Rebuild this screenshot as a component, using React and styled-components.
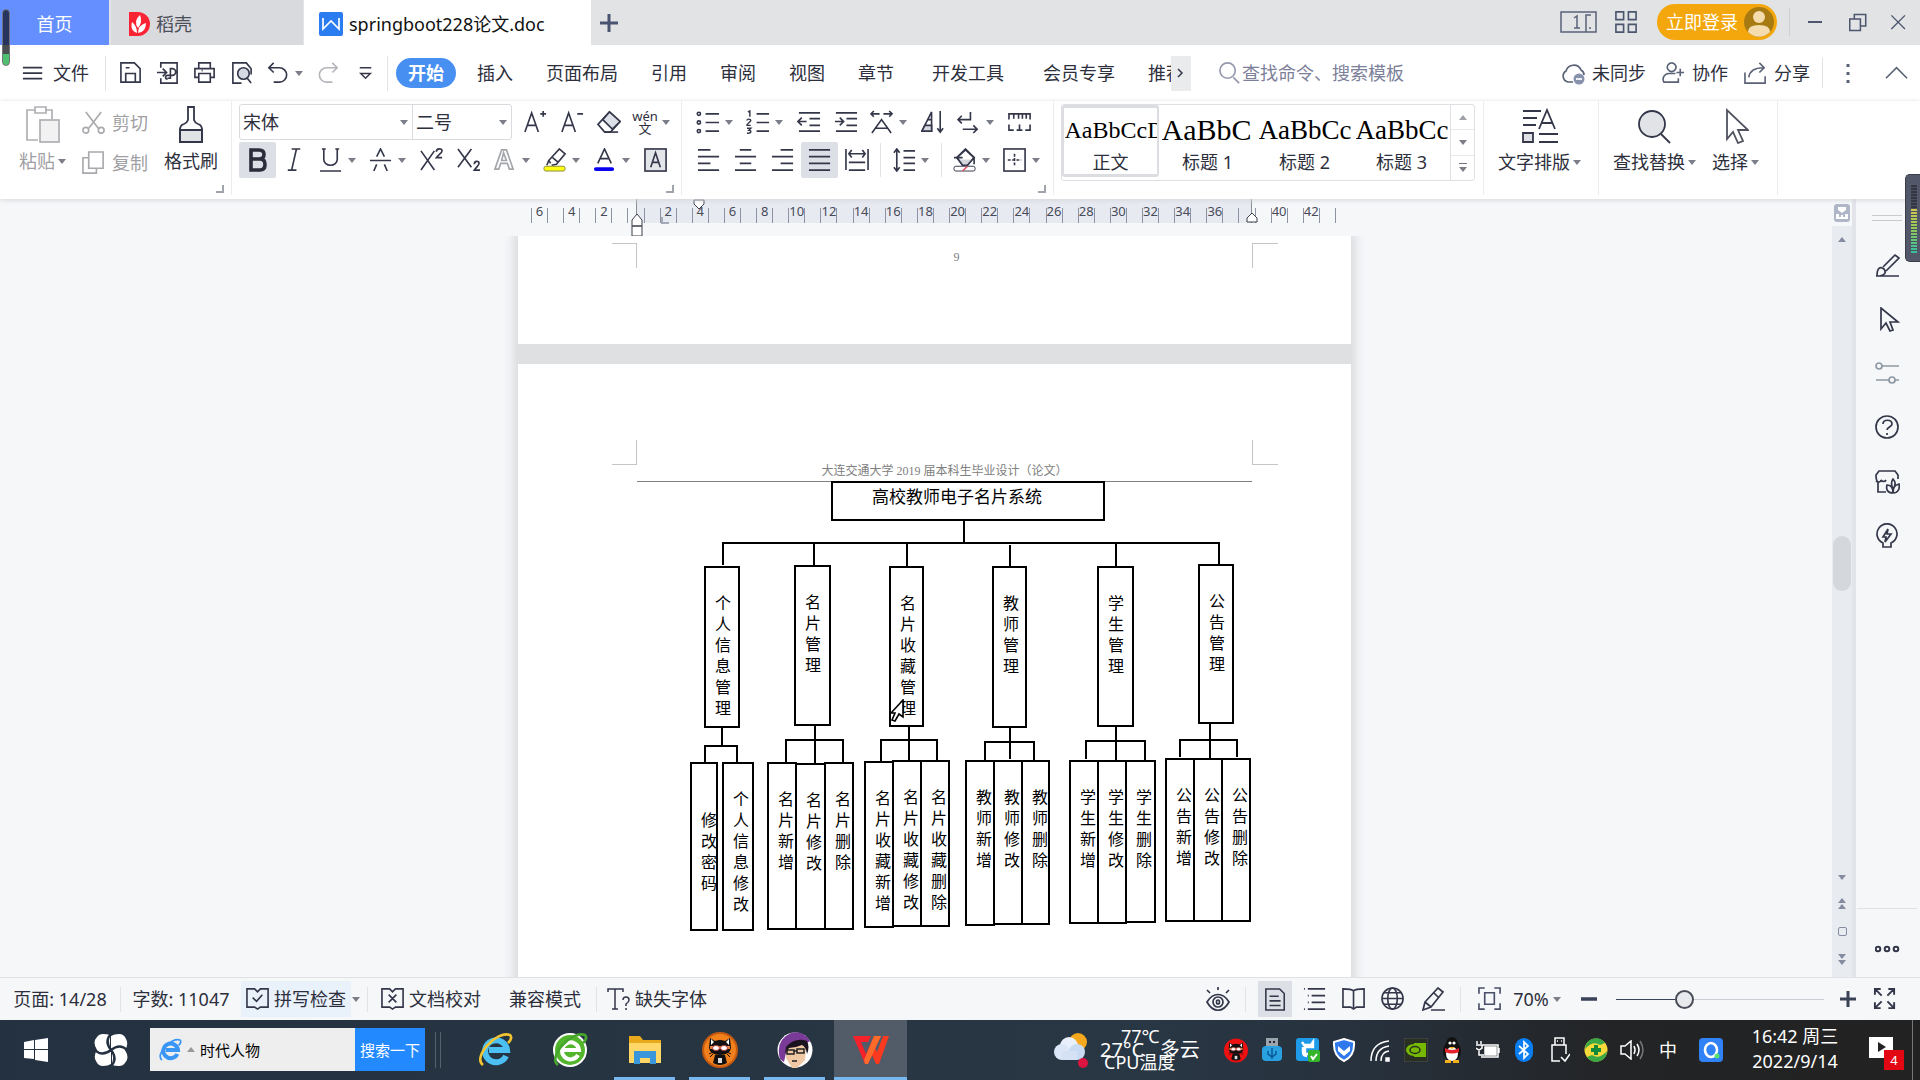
import React from "react";
import styled, { createGlobalStyle, css } from "styled-components";

const ui = `"Noto Sans", "Noto Sans CJK SC", sans-serif`;
const serif = `"Liberation Serif", "Noto Sans CJK SC", serif`;
const ink = "#34374a";

const Global = createGlobalStyle`
  * { box-sizing: border-box; }
  html, body { margin: 0; height: 100%; overflow: hidden; }
  body { font: 18px/24px ${ui}; color: #2d2f3c; background: #f5f7f9; }
  button, input, select { font: inherit; color: inherit; border: 0; margin: 0; padding: 0; background: none; border-radius: 0; outline: 0; }
  button { cursor: default; white-space: nowrap; }
  svg { display: block; flex: none; }
`;

const Shell = styled.div`
  display: flex;
  flex-direction: column;
  height: 100vh;
  position: relative;
  overflow: hidden;
`;

const Caret = styled.span`
  flex: none;
  width: 0;
  height: 0;
  border: 4px solid transparent;
  border-top: 5px solid ${(p) => p.$color || "#7b7d88"};
  border-bottom: 0;
  ${(p) => p.$up && css`transform: rotate(180deg);`}
`;

/* ---------- icons ---------- */
const shapes = {
  save: <path d="M2 2h14l6 6v14H2zM7 22v-9h10v9M7 7h4" />,
  exportPdf: <path d="M5 7V2h17v21H5v-5M1 12h9M7 8l4 4-4 4M12 18h3V8h2a3 3 0 0 1 0 7h-5a2 2 0 0 0 0 4" />,
  print: <path d="M6 7V2h12v5M6 17H2V8h20v9h-4M6 13h12v9H6zM9 10h1" />,
  preview: <g><path d="M12 23H3V2h14l5 6v6" /><circle cx="14" cy="13" r="6" fill="#d5d9e2" /><path d="M18 18l4 5" /></g>,
  undo: <path d="M8 2L3 7l5 5M3 7h11a7 7 0 0 1 0 15H8" />,
  redo: <path d="M16 2l5 5-5 5M21 7H10a7 7 0 0 0 0 15h6" />,
  more: <path d="M6 7h12M7 13h10l-5 5z" strokeWidth="1.500" />,
  menu: <path d="M1 6h21M1 12h21M1 18h21" />,
  scissors: <g><path d="M4 1l13 17M20 1L7 18" /><circle cx="4" cy="20" r="3" /><circle cx="20" cy="20" r="3" /></g>,
  copy: <path d="M7 1h15v17H7zM7 7H1v16h14v-5" />,
  incA: <path d="M2 23L9 3l7 20M4 16h10M18 4h6M21 1v6" />,
  decA: <path d="M2 23L9 3l7 20M4 16h10M18 4h6" />,
  eraser: <g><path d="M1 15L13 2l11 10-10 11H8z" /><path d="M6 10l7-8 11 10-8 8z" fill="#dde0e6" /><path d="M8 23h14" /></g>,
  italic: <path d="M9 1h9M5 23h9M14 1L9 23" />,
  underline: <path d="M5 1v11a7 6 0 0 0 14 0V1M3 1h4M17 1h4M1 24h22" />,
  strike: <path d="M5 24l3-7M8 9l4-8 4 8M16 17l3 7M1 13h22" />,
  sup: <path d="M1 3l14 20M15 3L1 23M17 4c0-4 6-4 6-1 0 2-4 4-6 7h6" />,
  sub: <path d="M1 1l14 19M15 1L1 20M18 17c0-4 5-4 5-1 0 2-3 4-5 7h6" />,
  outA: <path d="M2 22L9 2h5l7 20h-4l-2-6H8l-2 6zM9 13h5l-3-8z" stroke="#a3a5ab" />,
  hilite: <g><path d="M8 16l-2-3L17 1l6 5-9 11-5 1M6 13l-2 5M10 10l6 5" /><rect x="1" y="19" width="22" height="5" rx="2" fill="#ffff14" stroke="#8a8a3a" strokeWidth="1" /></g>,
  colorA: <g><path d="M5 16L12 1l7 15M8 11h9" /><rect x="1" y="20" width="21" height="4" rx="2" fill="#0a00f0" stroke="none" /></g>,
  boxA: <g><rect x="1" y="1" width="22" height="23" fill="#e4e5e9" /><path d="M7 20l5-15 5 15M9 15h6" /></g>,
  bullets: <g><path d="M10 4h14M10 13h14M10 22h14" /><circle cx="3" cy="4" r="1.7" /><circle cx="3" cy="13" r="1.7" /><circle cx="3" cy="22" r="1.7" /></g>,
  numbers: <g><path d="M11 4h13M11 13h13M11 22h13" /><path d="M2 2l2-1v6M1 11c0-2 4-2 4 0 0 1-4 3-4 5h4M1 19h4l-2 2c3 0 3 4-2 3" strokeWidth="1.5" /></g>,
  outdent: <path d="M2 3h22M13 9h11M13 16h11M2 22h22M1 12h9M5 8l-4 4 4 4" />,
  indent: <path d="M2 3h22M13 9h11M13 16h11M2 22h22M1 12h9M6 8l4 4-4 4" />,
  scaleA: <path d="M2 24L12 10l10 14M5 19h14M1 4h9M4 1L1 4l3 3M14 4h9M20 1l3 3-3 3" />,
  sortA: <g><path d="M1 22L11 2v20z" /><path d="M4 16h7v6H1z" fill="#d5d7de" /><path d="M7 10h4M20 1v22M17 19l3 4 3-4" /></g>,
  wrap: <path d="M14 2v8H1M5 6l-4 4 4 4M6 20h15M17 16l4 4-4 4" />,
  tabs: <path d="M1 10V4h22v6M6 4v5M11 4v5M15 4v5M19 4v5M1 15v6h5M12 15v6M9 21h6M23 15v6h-5" />,
  left: <path d="M1 2h13M1 9h22M1 16h13M1 23h22" />,
  center: <path d="M6 2h12M1 9h22M6 16h12M1 23h22" />,
  right: <path d="M10 2h13M1 9h22M10 16h13M1 23h22" />,
  justify: <path d="M1 2h22M1 9h22M1 16h22M1 23h22" />,
  dist: <path d="M1 1v22M24 1v22M4 6h17M7 2L4 6l3 4M18 2l3 4-3 4M4 15h17M4 23h17" />,
  spacing: <path d="M12 3h12M12 10h12M12 16h12M12 23h12M5 2v21M2 5l3-4 3 4M2 20l3 4 3-4" />,
  fill: <g><path d="M4 10l9-8 9 8-7 8H10z" fill="#fff" /><path d="M5 12h17l-7 6h-5z" fill="#d5d7de" stroke="none" /><path d="M4 10l9-9 9 9-7 8H10zM1 10h9M22 10v7" /><rect x="1" y="19" width="22" height="5" rx="2" strokeWidth="1" /><path d="M10 24l5-5" stroke="#e05060" /></g>,
  border: <g><rect x="1" y="1" width="22" height="23" /><path d="M12 6v13M5 12.500h14" strokeDasharray="3 1.500" /></g>,
  cloud: <g><path d="M12 21H7a6 6 0 0 1-2-11A8 8 0 0 1 20 9c2 1 3 3 3 5" /><circle cx="18" cy="18" r="5.5" fill="#8793ad" stroke="none" /><path d="M15 18h6" stroke="#fff" /></g>,
  coop: <path d="M10 2a4.5 4.5 0 1 0 .1 0M14 13H7a6 6 0 0 0-5 9h15v-4M15 12h8M19 8v8" />,
  share: <path d="M1 12v11h21v-7M5 17c1-7 7-10 15-10M16 2l5 5-5 5" />,
  chevUp: <path d="M1 18L12 7l11 11" />,
  search: <g><circle cx="10" cy="10" r="8" /><path d="M16 17l6 6" /></g>,
  brush: <path d="M1 23h23M2 23c0-8 3-10 7-7 3 4 0 7-7 7M8 14L20 2l4 3-13 13" />,
  cursor: <path d="M6 1v21l5-6 4 8 3-1-3-8h8z" />,
  sliders: <g stroke="#8e99a3"><circle cx="4" cy="5" r="3" /><path d="M7 5h17M1 19h13M20 19h4" /><circle cx="17" cy="19" r="3" /></g>,
  help: <g><circle cx="12" cy="12" r="11" /><path d="M8 9c0-5 9-5 9 0 0 3-5 3-5 6M12 18v2" /></g>,
  store: <path d="M11 23H3V13M3 13C1 12 1 9 1 6l3-4h16l3 4v4M1 12c2 2 5 1 5-1 1 2 4 2 5 0M18 24c-6 0-7-4-6-8 3 0 6 2 6 8 0-6 2-8 6-9 1 5-1 9-6 9M18 10c3 3 3 6 0 10-2-4-2-7 0-10z" />,
  bulb: <path d="M8 24h8v-4a10 10 0 1 0-8 0zM13 6l-5 8h3l-1 5 6-8h-4z" />,
  dots: <g strokeWidth="2"><circle cx="3" cy="12" r="2.300" /><circle cx="12" cy="12" r="2.300" /><circle cx="21" cy="12" r="2.300" /></g>,
  spell: <path d="M9 2l3 3 3-3h8v19h-8l-3 2-3-2H1V2zM7 11l4 4 6-7" />,
  proof: <path d="M9 2l3 3 3-3h8v19h-8l-3 2-3-2H1V2zM8 8l8 8M16 8l-8 8" />,
  eye: <g><path d="M1 15c6-10 16-10 22 0-6 11-16 11-22 0z" /><circle cx="12" cy="15" r="5" /><ellipse cx="12" cy="15" rx="1.500" ry="2" /><path d="M12 0v3M1 3l3 3M23 3l-3 3" /></g>,
  page: <path d="M2 1h15l5 5v18H2zM6 9h10M6 14h12M6 19h12" />,
  outline: <path d="M5 2h18M9 9h14M9 16h14M5 23h18M1 2h1M5 9h1M5 16h1M1 23h1" />,
  book: <path d="M12 4c-2-2-6-2-11-2v19h8l3 2 3-2h8V2c-5 0-9 0-11 2v18" />,
  globe: <g><circle cx="12" cy="12" r="11" /><ellipse cx="12" cy="12" rx="5" ry="11" /><path d="M1 12h22M3 6h18M3 18h18" /></g>,
  pen: <path d="M10 23h14M4 15L17 1l5 4L10 20l-8 3zM4 15l6 5M13 6l4 4" />,
  fit: <path d="M1 7V1h6M17 1h6v6M23 17v6h-6M7 23H1v-6M7 6h10v12H7z" />,
  full: <g strokeWidth="2"><path d="M2 8V2h6M2 2l7 7M16 2h6v6M22 2l-7 7M2 16v6h6M2 22l7-7M22 16v6h-6M22 22l-7-7" /></g>,
  tile: <path d="M2 2h8v8H2zM15 2h8v8h-8zM2 15h8v8H2zM15 15h8v8h-8z" />,
  restore: <path d="M1 8h14v15H1zM7 8V2h15v15h-7" />,
  close: <path d="M2 2l20 20M22 2L2 22" />,
};

const Icon = ({ n, s = 24, c = ink, w = 1.7 }) => (
  <svg width={s} height={s} viewBox="0 0 25 25" fill="none" stroke={c} strokeWidth={w} aria-hidden="true">
    {shapes[n]}
  </svg>
);

/* ---------- title bar ---------- */
const TitleBar = styled.header`
  display: flex;
  height: 45px;
  flex: none;
  background: #e1e3e5;
  justify-content: space-between;
`;
const Row = styled.div`
  display: flex;
  align-items: ${(p) => (p.$top ? "flex-start" : "center")};
  gap: ${(p) => p.$gap || 0}px;
`;
const Tab = styled.button`
  display: flex;
  align-items: center;
  gap: 6px;
  height: 45px;
  padding: 3px 15px 0;
  width: ${(p) => p.$w}px;
  background: ${(p) => p.$bg};
  color: ${(p) => p.$fg};
  justify-content: ${(p) => (p.$mid ? "center" : "flex-start")};
  margin-right: ${(p) => p.$gap || 0}px;
`;
const IconButton = styled.button`
  display: flex;
  align-items: center;
  justify-content: center;
  width: ${(p) => p.$w || 36}px;
  height: 36px;
`;
const Login = styled.button`
  display: flex;
  align-items: center;
  gap: 6px;
  width: 120px;
  height: 36px;
  padding: 0 3px 0 9px;
  border-radius: 18px;
  background: #f4a70c;
  color: #fff;
  margin: 0 12px 0 8px;
`;
const WindowRow = styled(Row)`
  height: 44px;
`;
const Sep = styled.span`
  flex: none;
  width: 1px;
  height: ${(p) => p.$h}px;
  background: ${(p) => p.$c || "#e2e3e6"};
  margin: 0 ${(p) => p.$m || 0}px;
`;
const Space = styled.span`
  flex: none;
  width: ${(p) => p.$w}px;
`;

/* ---------- menu row ---------- */
const MenuBar = styled.nav`
  display: flex;
  align-items: center;
  flex: none;
  height: 56px;
  background: #fff;
`;
const FileButton = styled.button`
  display: flex;
  align-items: center;
  gap: 8px;
  width: 105px;
  padding-left: 22px;
`;
const Tool = styled.button`
  display: flex;
  align-items: center;
  gap: 5px;
  flex: none;
  height: 36px;
  width: ${(p) => (p.$drop ? 50 : 37)}px;
  ${(p) => (p.$drop ? "padding-left: 6px;" : "justify-content: center;")}
  border-radius: 2px;
  background: ${(p) => (p.$on ? "#dcdfe5" : "transparent")};
`;
const ToolRow = styled(Row)`
  padding: 0 3px 0 6px;
`;
const Menu = styled.button`
  height: 30px;
  padding: 0 ${(p) => (p.$wide ? 22 : 16)}px 0 ${(p) => (p.$wide ? 22 : 17)}px;
  ${(p) =>
    p.$on &&
    css`
      width: 60px;
      margin: 0 4px 0 8px;
      padding: 0;
      border-radius: 15px;
      background: #478ff0;
      color: #fff;
      font-weight: 700;
    `}
`;
const MenuClip = styled(Menu)`
  width: 40px;
  padding-right: 0;
  overflow: hidden;
  text-align: left;
`;
const MoreTabs = styled.button`
  width: 20px;
  height: 35px;
  background: #e9ebed;
  display: flex;
  align-items: center;
  justify-content: center;
`;
const Search = styled.label`
  display: flex;
  align-items: center;
  margin-left: 27px;
  flex: 1;
  min-width: 0;
  input { width: 200px; height: 30px; }
  input::placeholder { color: #7c8099; opacity: 1; }
`;
const Action = styled.button`
  display: flex;
  align-items: center;
  gap: 6px;
  margin-right: ${(p) => p.$gap || 16}px;
`;

/* ---------- ribbon ---------- */
const Ribbon = styled.section`
  display: flex;
  flex: none;
  height: 98px;
  background: #fff;
  box-shadow: 0 1px 5px #d4d6da;
  position: relative;
  z-index: 2;
`;
const Group = styled.div`
  display: flex;
  position: relative;
  height: 94px;
  padding: ${(p) => p.$pad};
  width: ${(p) => p.$w}px;
  flex: none;
  border-right: 1px solid #ececef;
`;
const Launcher = styled.button`
  position: absolute;
  right: 7px;
  bottom: 2px;
  width: 8px;
  height: 8px;
  border-right: 2px solid #a2a4ab;
  border-bottom: 2px solid #a2a4ab;
`;
const Lines = styled.div`
  display: flex;
  flex-direction: column;
  gap: 2px;
`;
const Big = styled.button`
  display: flex;
  flex-direction: column;
  align-items: center;
  gap: 6px;
  padding-top: 2px;
  height: 74px;
  color: ${(p) => (p.$off ? "#a0a0a4" : "inherit")};
`;
const Small = styled.button`
  display: flex;
  align-items: center;
  gap: 6px;
  height: 38px;
  color: #a0a0a4;
`;
const Combos = styled.div`
  display: flex;
  height: 36px;
  border: 1px solid #d9dbdf;
  border-radius: 3px;
  margin-right: 4px;
`;
const Combo = styled.label`
  display: flex;
  align-items: center;
  padding: 0 4px 0 3px;
  width: ${(p) => p.$w}px;
  & + & { border-left: 1px solid #d9dbdf; }
  select { appearance: none; flex: 1; min-width: 0; height: 34px; }
`;
const Gallery = styled.div`
  display: flex;
  height: 77px;
  border: 1px solid #dfe0e3;
  border-radius: 3px;
`;
const StyleCard = styled.button`
  display: flex;
  flex-direction: column;
  align-items: center;
  width: 97px;
  height: 72px;
  border: solid ${(p) => (p.$on ? "#dcdde1" : "transparent")};
  border-width: 3px 2px;
  border-radius: 3px;
`;
const Sample = styled.span`
  width: 92px;
  height: 42px;
  overflow: hidden;
  text-align: left;
  color: #000;
  font: ${(p) => p.$s}px/44px ${serif};
`;
const GalleryScroll = styled.div`
  display: flex;
  flex-direction: column;
  width: 24px;
  border-left: 1px solid #dfe0e3;
`;
const ScrollStep = styled.button`
  display: flex;
  flex-direction: column;
  gap: 3px;
  flex: 1;
  align-items: center;
  justify-content: center;
  & + & { border-top: 1px solid #e8e9eb; }
`;
const Bar = styled.span`
  width: 8px;
  height: 1px;
  background: #70727e;
`;
const Pinyin = styled.span`
  display: flex;
  flex-direction: column;
  align-items: center;
  width: 24px;
  font-size: 13px;
  line-height: 12px;
`;

/* ---------- work area ---------- */
const Work = styled.main`
  display: flex;
  flex: 1;
  min-height: 0;
`;
const Canvas = styled.div`
  flex: 1;
  min-width: 0;
  overflow: hidden;
  position: relative;
  background: #f5f7f9;
  padding-left: 37px;
`;
const Ruler = styled.div`
  position: relative;
  display: flex;
  width: 833px;
  height: 37px;
  margin: 0 auto;
  padding: 0 15px 0 13px;
`;
const Band = styled.div`
  position: absolute;
  left: 118px;
  width: 616px;
  top: 0;
  height: 24px;
  background: #e7eaf1;
  border: solid #8a8e9b;
  border-width: 0 1px;
`;
const Tick = styled.div`
  position: relative;
  flex: 1;
  height: 15px;
  margin-top: 9px;
  border-left: 1px solid #8d93a3;
  display: flex;
  justify-content: center;
  align-items: center;
  font-size: 13px;
  line-height: 15px;
  color: #474b59;
  padding-bottom: 8px;
`;
const LastTick = styled(Tick)`
  border-right: 1px solid #8d93a3;
`;
const Marker = styled.svg`
  position: absolute;
  left: ${(p) => p.$x}px;
  top: ${(p) => p.$y}px;
`;
const Sheets = styled.div`
  width: 833px;
  margin: 0 auto;
  display: flex;
  flex-direction: column;
  gap: 20px;
  background: #dfe0e2;
  box-shadow: 0 0 10px 4px #d6d8db;
  clip-path: inset(0 -14px);
`;
const Sheet = styled.article`
  background: #fff;
  height: ${(p) => p.$h}px;
  padding-top: ${(p) => p.$top}px;
`;
const Margins = styled.div`
  display: grid;
  grid-template-columns: 25px 615px 26px;
  margin-left: 94px;
  height: 42px;
`;
const Corner = styled.span`
  height: 25px;
  border: 0 solid #c4c5c8;
  border-width: ${(p) => p.$b};
`;
const HeadText = styled.div`
  display: flex;
  justify-content: center;
  align-items: flex-end;
  font: 12px/16px ${serif};
  color: #808080;
  padding-bottom: 2px;
  border-bottom: 1px solid ${(p) => (p.$line ? "#808080" : "transparent")};
  ${(p) => p.$num && "align-items: flex-start; padding: 6px 0 0 24px;"}
`;
const Diagram = styled.div`
  position: relative;
  width: 614px;
  height: 460px;
  margin: -1px 0 0 119px;
  color: #000;
`;
const Node = styled.div`
  position: absolute;
  left: ${(p) => p.$b[0]}px;
  top: ${(p) => p.$b[1]}px;
  width: ${(p) => p.$b[2]}px;
  height: ${(p) => p.$b[3]}px;
  border: 2px solid #000;
  padding: ${(p) => (p.$low ? 46 : 25)}px 0 0 9px;
  font: 16px/21px ${serif};
  overflow: hidden;
`;
const Root = styled(Node)`
  padding: 4px 0 0 39px;
  font-size: 17px;
`;
const Label = styled.span`
  display: block;
  width: 17px;
  word-break: break-all;
`;
const Wires = styled.svg`
  position: absolute;
  inset: 0;
`;
const Pointer = styled.svg`
  position: absolute;
  left: 253px;
  top: 218px;
`;

const ScrollBar = styled.div`
  display: flex;
  flex-direction: column;
  align-items: center;
  width: 24px;
  flex: none;
  background: #e8ebf0;
  border-right: 4px solid #e2e4ea;
`;
const RulerToggle = styled.button`
  display: flex;
  align-items: center;
  justify-content: center;
  height: 27px;
  width: 20px;
  background: #f5f7f9;
`;
const Track = styled.div`
  flex: 1;
  width: 20px;
  padding: 11px 1px 0;
  display: flex;
  flex-direction: column;
  align-items: center;
`;
const Thumb = styled.div`
  width: 18px;
  height: 55px;
  margin-top: 294px;
  border-radius: 9px;
  background: #d4d7db;
`;
const Steps = styled.div`
  display: flex;
  flex-direction: column;
  align-items: center;
  gap: 18px;
  padding-bottom: 12px;
`;
const Pair = styled.button`
  display: flex;
  flex-direction: column;
  gap: 1px;
`;
const Square = styled.button`
  width: 9px;
  height: 9px;
  border: 1px solid #858ba0;
  border-radius: 2px;
`;
const Side = styled.aside`
  display: flex;
  flex-direction: column;
  align-items: center;
  width: 64px;
  flex: none;
  padding-right: 2px;
`;
const Grip = styled.span`
  width: 30px;
  height: 6px;
  margin: 16px 0 17px;
  border: 1px solid #c9cbcf;
  border-width: 1px 0;
`;
const SideButton = styled.button`
  display: flex;
  height: 54px;
  align-items: center;
`;
const SideEnd = styled.div`
  margin-top: auto;
  width: 60px;
  height: 69px;
  padding-top: 28px;
  border-top: 1px solid #dfe1e5;
  display: flex;
  justify-content: center;
  align-items: flex-start;
`;

/* ---------- status bar ---------- */
const Status = styled.footer`
  display: flex;
  align-items: center;
  flex: none;
  height: 43px;
  border-top: 1px solid #dfe1e4;
  background: #f5f7f9;
`;
const Stat = styled.button`
  display: flex;
  align-items: center;
  justify-content: center;
  gap: 4px;
  height: 36px;
  width: ${(p) => p.$w}px;
  background: ${(p) => p.$bg || "none"};
`;
const Grow = styled.span`
  flex: 1;
`;
const Zoom = styled.input`
  appearance: none;
  width: 208px;
  height: 20px;
  margin: 0 16px 0 13px;
  background: linear-gradient(90deg, #3a4257 33%, #c9ccd2 33%) center / 100% 1px no-repeat;
  &::-webkit-slider-thumb {
    appearance: none;
    width: 19px;
    height: 19px;
    border: 2px solid #4a4d58;
    border-radius: 50%;
    background: #e8e9ec;
  }
`;

/* ---------- taskbar ---------- */
const Taskbar = styled.footer`
  display: flex;
  align-items: stretch;
  flex: none;
  height: 60px;
  color: #fff;
  background: linear-gradient(90deg, #243140, #293643 60%, #27323e 70%, #232426 84%, #222);
`;
const TaskButton = styled.button`
  display: flex;
  align-items: center;
  justify-content: center;
  width: ${(p) => p.$w || 75}px;
  border: solid transparent;
  border-width: 0 7px;
  background-clip: padding-box;
  ${(p) =>
    p.$run &&
    css`
      background-image: linear-gradient(#78b8ee, #78b8ee);
      background-repeat: no-repeat;
      background-size: 100% 3px;
      background-position: bottom;
    `}
  ${(p) => p.$on && "background-color: #515c68; border-width: 0;"}
`;
const WebSearch = styled.form`
  display: flex;
  align-items: center;
  width: 275px;
  height: 43px;
  margin: 8px 10px 0 0;
  background: #eee;
  color: #000;
  font-size: 15px;
  padding-left: 8px;
  gap: 5px;
  input { flex: 1; min-width: 0; height: 40px; }
  button { width: 70px; height: 43px; background: #2389ff; color: #fff; }
`;
const Weather = styled.div`
  position: relative;
  width: 112px;
`;
const Over = styled.span`
  position: absolute;
  left: ${(p) => p.$x}px;
  top: ${(p) => p.$y}px;
  white-space: nowrap;
  font-size: ${(p) => p.$s || 18}px;
  line-height: 24px;
`;
const TrayButton = styled.button`
  display: flex;
  align-items: center;
  justify-content: center;
  width: 36px;
`;
const Clock = styled.button`
  width: 118px;
  text-align: center;
  font-size: 18px;
  line-height: 25px;
  padding-bottom: 3px;
`;
const Notice = styled.button`
  position: relative;
  display: flex;
  align-items: center;
  width: 58px;
  padding: 0 0 4px 15px;
`;
const Badge = styled.span`
  position: absolute;
  left: 30px;
  top: 30px;
  width: 20px;
  height: 20px;
  background: #e30613;
  font-size: 13px;
  line-height: 20px;
`;

/* ---------- overlays ---------- */
const MeterLeft = styled.div`
  position: absolute;
  left: 2px;
  top: 9px;
  width: 8px;
  height: 57px;
  border: 1px solid #71747d;
  border-radius: 4px;
  z-index: 4;
  background: linear-gradient(#27345f 64%, #4b4e50 64% 80%, #4fbf70 80%);
`;
const MeterRight = styled.div`
  position: absolute;
  right: 0;
  top: 174px;
  width: 15px;
  height: 88px;
  padding: 10px 2px 9px 5px;
  border: 1px solid #3a3d48;
  border-right: 0;
  border-radius: 5px 0 0 5px;
  background: #53576a;
  z-index: 4;
`;
const Level = styled.div`
  width: 6px;
  height: 68px;
  background: repeating-linear-gradient(transparent 0 2px, #4a5060 2px 3px), linear-gradient(#333744 34%, #d9c850 34%, #8fc95a 65%, #35c0a0);
`;

const T = ({ n, drop, on, c, label }) => (
  <Tool $drop={drop} $on={on} aria-label={label || n}>
    <Icon n={n} c={c} />
    {drop && <Caret />}
  </Tool>
);

const ticks = Array.from({ length: 50 }, (_, i) => {
  if (i % 2) return "";
  const v = Math.abs(i - 6);
  return v === 0 || v === 38 ? "" : String(v);
});

const nodes = [
  ["个人信息管理", 67, 85, 36, 162], ["名片管理", 157, 84, 37, 161], ["名片收藏管理", 252, 85, 35, 161],
  ["教师管理", 355, 85, 35, 162], ["学生管理", 460, 85, 37, 161], ["公告管理", 561, 83, 36, 160],
  ["修改密码", 53, 281, 28, 169], ["个人信息修改", 85, 281, 32, 169],
  ["名片新增", 130, 281, 30, 168], ["名片修改", 158, 282, 31, 167], ["名片删除", 187, 281, 30, 168],
  ["名片收藏新增", 227, 280, 30, 167], ["名片收藏修改", 255, 279, 30, 167], ["名片收藏删除", 283, 279, 30, 167],
  ["教师新增", 328, 279, 30, 166], ["教师修改", 356, 279, 30, 165], ["教师删除", 384, 279, 29, 165],
  ["学生新增", 432, 279, 30, 164], ["学生修改", 460, 279, 30, 164], ["学生删除", 488, 279, 31, 163],
  ["公告新增", 528, 277, 30, 164], ["公告修改", 556, 277, 30, 164], ["公告删除", 584, 277, 30, 164],
];

const wires =
  "M327 40V62M85 62H583M86 62V84M177 62V84M270 62V85M373 64V85M479 62V85M582 62V83" +
  "M85 247V265M68 281V265H100V281M178 245V283M149 281V259H206V281M272 246V280M244 280V259H300V280" +
  "M373 247V278M348 279V261H397V279M479 246V279M449 278V260H508V279M573 243V277M543 276V259H600V276";

const Ninja = ({ w, h, bg }) => (
  <svg width={w} height={h} viewBox="0 0 36 36">
    <circle cx="18" cy="18" r="17" fill={bg} stroke={bg === "#f2801c" ? "#c65a10" : bg} strokeWidth="2" />
    <path d="M8 6l5 3q5-2 10 0l5-3 1 10q-1 7-11 7T7 16z" fill="#111" />
    <path d="M9 7l3 3-3 3zM27 7l-3 3 3 3z" fill="#fff" />
    <path d="M8 14h20v3H8z" fill="#e8823a" />
    <ellipse cx="14" cy="16" rx="3.500" ry="2.500" fill="#fff" stroke="#b44" /><ellipse cx="22" cy="16" rx="3.500" ry="2.500" fill="#fff" stroke="#b44" />
    <path d="M13 23h10l2 8q-7 4-14 0z" fill="#111" /><path d="M16 26h4v5h-4z" fill="#ddd" />
    <path d="M11 20l-4 2M11 22l-3 3M25 20l4 2M25 22l3 3" stroke="#111" />
  </svg>
);
const Explorer = ({ s, c, ring, bg }) => (
  <svg width={s} height={s} viewBox="0 0 36 36" fill="none">
    {bg && <circle cx="18" cy="18" r="16" fill={bg} stroke="#fff" strokeWidth="2" />}
    {bg ? (
      <path d="M26 23A8.500 8.500 0 1 1 27 18H11" stroke={c} strokeWidth="4" />
    ) : (
      <path d="M29 24A11 11 0 1 1 30 18H12" stroke={c} strokeWidth="6" />
    )}
    <path d="M6 33C-5 25 20-2 33 3c3 3-1 7-2 8" stroke={ring} strokeWidth="2.600" />
  </svg>
);

const svg = (w, h, kids) => (
  <svg width={w} height={h} viewBox={`0 0 ${w} ${h}`} fill="none" stroke="#fff" strokeWidth="1.5">{kids}</svg>
);
const tray = [
  ["忍者", <Ninja w={24} h={25} bg="#ee1111" />],
  ["U盘", svg(20, 24, <g stroke="none"><rect x="4" y="0" width="12" height="8" fill="#9aa4ab" /><path d="M7 3h2v2H7zM11 3h2v2h-2z" fill="#223" /><rect x="0" y="8" width="20" height="15" rx="4" fill="#2aa2e2" /><path d="M10 10v11M6 13v3l4 3 4-3v-3" fill="none" stroke="#0a5a96" strokeWidth="1.5" /></g>)],
  ["电脑管家", svg(24, 24, <g stroke="none"><rect width="23" height="23" rx="3" fill="#1d9be8" /><path d="M6 4l2 3h7l2-3v5H9v7h4M7 9v5q0 4 4 4" stroke="#fff" strokeWidth="2.4" /><rect x="12" y="12" width="12" height="12" rx="2" fill="#35b52c" /><path d="M15 18l2 3 4-5" stroke="#fff" strokeWidth="2" /></g>)],
  ["安全卫士", svg(24, 24, <g><path d="M12 1l10 3q1 14-10 19Q1 18 2 4z" fill="#2f78ee" strokeWidth="2" /><path d="M6 8l6 5 6-5v5l-6 5-6-5z" fill="#fff" stroke="none" /></g>)],
  ["无线网络", svg(20, 24, <g><path d="M1 23Q1 5 19 3M6 23Q6 10 19 8M11 23q0-9 8-10" /><path d="M16 20h3v3h-3z" fill="#fff" /></g>)],
  ["显卡设置", svg(24, 24, <g stroke="none"><rect width="24" height="24" rx="2" fill="#273022" stroke="#444" /><path d="M10 5h12v14H10z" fill="#76b900" /><ellipse cx="10" cy="12" rx="8" ry="6" fill="#76b900" /><ellipse cx="11" cy="12" rx="5" ry="3.5" fill="none" stroke="#273022" strokeWidth="1.5" /></g>)],
  ["即时通讯", svg(20, 26, <g stroke="none"><ellipse cx="10" cy="14" rx="9" ry="10" fill="#111" /><ellipse cx="10" cy="8" rx="6" ry="8" fill="#111" /><ellipse cx="10" cy="17" rx="6" ry="7" fill="#fff" /><path d="M3 11q7 4 14 0v4q-7 3-14 0z" fill="#e4222a" /><circle cx="8" cy="6" r="1.6" fill="#fff" /><circle cx="12" cy="6" r="1.6" fill="#fff" /><path d="M7 10h6l-3 2zM3 23h6v3H3zM11 23h6v3h-6z" fill="#f5b01d" /></g>)],
  ["电池", svg(24, 18, <g><path d="M6 4h16v12H5M23 7v5M1 0v3M5 0v3M0 4h6v3L3 9 0 7M3 9v5h5" /><path d="M9 6h11v8H9z" fill="#fff" /></g>)],
  ["蓝牙", svg(18, 24, <g><rect width="18" height="24" rx="9" fill="#0a7ef0" stroke="none" /><path d="M4 8l9 8-4 4V4l4 4-9 8" strokeWidth="1.7" /></g>)],
  ["弹出设备", svg(19, 26, <path d="M4 8V1h9v7M9 24H1V8h14v9M6 4h1M10 4h1M10 20l4 4 5-7" />)],
  ["杀毒", svg(24, 24, <g stroke="none"><circle cx="12" cy="12" r="11.5" fill="#f7d93a" /><path d="M1 11A11 11 0 0 1 21 5l-5 2Q9 2 1 11zM23 13A11 11 0 0 1 3 19l5-2q7 5 15-4z" fill="#39a845" /><path d="M10 7h4v3h3v4h-3v3h-4v-3H7v-4h3z" fill="#138a3a" /></g>)],
  ["音量", svg(24, 20, <g><path d="M1 6h4l6-5v18l-6-5H1z" /><path d="M14 6q2 4 0 8M17 4q4 6 0 12" /><path d="M20 1q6 9 0 18" stroke="#777" /></g>)],
];

export default function App() {
  return (
    <Shell>
      <Global />
      <TitleBar>
        <Row>
          <Tab $w={109} $bg="#658fff" $fg="#fff" $mid $gap={2}>首页</Tab>
          <Tab $w={192} $bg="#d9dadd" $fg="#4c4e59" $gap={1}>
            {svg(24, 24, <g stroke="none"><path d="M3 0h9a12 12 0 0 1 0 24H3z" fill="#fb2434" /><path d="M11 21C5 19 5 14 6 10q5 4 5 11zM12 16Q7 9 14 3q3 7-2 13zM12 21q0-8 8-10 0 9-8 10z" fill="#fff" /></g>)}
            稻壳
          </Tab>
          <Tab $w={287} $bg="#fff" $fg="#111">
            {svg(24, 24, <g><rect width="24" height="24" rx="2" fill="#2a7cf0" stroke="none" /><path d="M4 6v11l8-8 8 8V6" strokeWidth="1.7" /></g>)}
            springboot228论文.doc
          </Tab>
          <IconButton aria-label="新建标签">{svg(18, 18, <path d="M9 0v18M0 9h18" stroke="#4a5470" strokeWidth="3" />)}</IconButton>
        </Row>
        <WindowRow>
          <IconButton $w={50} aria-label="单页视图">
            <svg width="37" height="22" fill="none" stroke="#5a6378" strokeWidth="1.5"><path d="M1 1h35v20H1zM31 4h-5v17M31 17h-2M14 7l3-2v12M14 17h6" /></svg>
          </IconButton>
          <IconButton $w={46} aria-label="应用"><Icon n="tile" c="#4c566f" /></IconButton>
          <Login>
            立即登录
            {svg(30, 30, <g stroke="none"><circle cx="15" cy="15" r="15" fill="#a87a12" /><circle cx="15" cy="10" r="6" fill="#f4dcae" /><path d="M4 25q0-7 11-7t11 7a15 15 0 0 1-22 0z" fill="#f4dcae" /></g>)}
          </Login>
          <Sep $h={28} $c="#cdd0d4" />
          <IconButton $w={50} aria-label="最小化">{svg(14, 2, <path d="M0 1h14" stroke="#4c566f" strokeWidth="2" />)}</IconButton>
          <IconButton aria-label="还原"><Icon n="restore" s={19} c="#4c566f" w={2} /></IconButton>
          <IconButton $w={44} aria-label="关闭"><Icon n="close" s={17} c="#4c566f" w={2} /></IconButton>
        </WindowRow>
      </TitleBar>

      <MenuBar>
        <FileButton><Icon n="menu" s={23} w={1.9} />文件</FileButton>
        <Sep $h={35} />
        <ToolRow>
          <T n="save" label="保存" /><T n="exportPdf" label="输出" /><T n="print" label="打印" /><T n="preview" label="预览" />
          <T n="undo" drop label="撤销" /><T n="redo" c="#b5b6bb" label="恢复" /><T n="more" label="更多" />
        </ToolRow>
        <Sep $h={35} />
        <Menu $on>开始</Menu>
        {["插入", "页面布局", "引用", "审阅", "视图", "章节"].map((m) => <Menu key={m}>{m}</Menu>)}
        <Menu $wide>开发工具</Menu>
        <Menu>会员专享</Menu>
        <MenuClip>推荐</MenuClip>
        <MoreTabs aria-label="更多选项卡">{svg(8, 10, <path d="M1 1l4 4-4 4" stroke={ink} />)}</MoreTabs>
        <Search>
          <Icon n="search" c="#9698ad" />
          <input aria-label="查找" placeholder="查找命令、搜索模板" />
        </Search>
        <Action><Icon n="cloud" s={25} c="#5a6276" />未同步</Action>
        <Action><Icon n="coop" c="#5a6276" />协作</Action>
        <Action $gap={12}><Icon n="share" c="#5a6276" />分享</Action>
        <Sep $h={30} />
        <IconButton $w={50} aria-label="选项">{svg(4, 20, <path d="M2 1v3M2 9v3M2 17v3" stroke="#5a6276" strokeWidth="3" />)}</IconButton>
        <IconButton $w={47} aria-label="收起功能区"><Icon n="chevUp" c="#5a6276" /></IconButton>
      </MenuBar>

      <Ribbon>
        <Group $w={232} $pad="3px 8px 0 19px">
          <Row $top $gap={16}>
            <Big $off>
              <svg width="34" height="37" fill="none" stroke="#b0b0b4" strokeWidth="1.7"><path d="M12 34H1V4h8M19 4h7v9M9 1h11v6H9z" /><rect x="14" y="14" width="19" height="22" fill="#f2f2f3" /></svg>
              <Row $gap={3}>粘贴<Caret /></Row>
            </Big>
            <Lines>
              <Small><Icon n="scissors" c="#a9a9ad" />剪切</Small>
              <Small><Icon n="copy" c="#a9a9ad" />复制</Small>
            </Lines>
            <Big>
              <svg width="30" height="37" fill="none" stroke={ink} strokeWidth="1.8"><path d="M4 24h22v12H4z" fill="#e2e3e6" /><path d="M12 1h6v13q1 3 4 4 4 1 4 6v12H4V24q0-5 4-6 3-1 4-4z" /></svg>
              格式刷
            </Big>
          </Row>
          <Launcher aria-label="剪贴板设置" />
        </Group>

        <Group $w={450} $pad="3px 0 0 7px">
          <Lines>
            <Row>
              <Combos>
                <Combo $w={172}><select aria-label="字体"><option>宋体</option></select><Caret /></Combo>
                <Combo $w={99}><select aria-label="字号"><option>二号</option></select><Caret /></Combo>
              </Combos>
              <T n="incA" /><T n="decA" /><T n="eraser" />
              <Tool $drop aria-label="拼音指南">
                <Pinyin><span>wén</span><span>文</span></Pinyin>
                <Caret />
              </Tool>
            </Row>
            <Row>
              <Tool $on aria-label="加粗"><svg width="20" height="24" fill="none" stroke="#2b2d3b" strokeWidth="3.6"><path d="M3 2h8q5 0 5 4.500t-5 4.500H3zM3 11h9q5 0 5 5.500t-5 5.500H3z" /></svg></Tool>
              <T n="italic" /><T n="underline" drop /><T n="strike" drop /><T n="sup" /><T n="sub" />
              <T n="outA" drop /><T n="hilite" drop /><T n="colorA" drop /><T n="boxA" />
            </Row>
          </Lines>
          <Launcher aria-label="字体设置" />
        </Group>

        <Group $w={372} $pad="3px 0 0 8px">
          <Lines>
            <Row>
              <T n="bullets" drop /><T n="numbers" drop /><T n="outdent" /><T n="indent" /><T n="scaleA" drop /><T n="sortA" /><T n="wrap" drop /><T n="tabs" />
            </Row>
            <Row>
              <T n="left" /><T n="center" /><T n="right" /><T n="justify" on /><T n="dist" />
              <Sep $h={34} $m={5} /><T n="spacing" drop /><Sep $h={34} $m={5} /><T n="fill" drop /><T n="border" drop />
            </Row>
          </Lines>
          <Launcher aria-label="段落设置" />
        </Group>

        <Group $w={430} $pad="3px 7px 0 7px">
          <Gallery>
            <StyleCard $on><Sample $s={24}>AaBbCcDd</Sample>正文</StyleCard>
            <StyleCard><Sample $s={30}>AaBbC</Sample>标题 1</StyleCard>
            <StyleCard><Sample $s={27}>AaBbCcD</Sample>标题 2</StyleCard>
            <StyleCard><Sample $s={27}>AaBbCcD</Sample>标题 3</StyleCard>
            <GalleryScroll>
              <ScrollStep aria-label="上一行"><Caret $up $color="#a0a2aa" /></ScrollStep>
              <ScrollStep aria-label="下一行"><Caret /></ScrollStep>
              <ScrollStep aria-label="展开"><Bar /><Caret /></ScrollStep>
            </GalleryScroll>
          </Gallery>
        </Group>

        <Group $w={115} $pad="4px 0 0 14px">
          <Big>
            <svg width="36" height="37" fill="none" stroke={ink} strokeWidth="1.8"><path d="M1 4h18M1 11h14M1 18h13M17 22l8-19 8 19M20 16h10M17 27h19M17 35h19" /><path d="M1 26h10v9H1z" fill="#e0e1e6" /></svg>
            <Row $gap={3}>文字排版<Caret /></Row>
          </Big>
        </Group>
        <Group $w={179} $pad="4px 0 0 14px">
          <Row $top $gap={16}>
            <Big>
              <svg width="36" height="37" fill="none" stroke={ink} strokeWidth="1.8"><circle cx="15" cy="17" r="13" fill="#e2e3e7" /><path d="M24 27l9 9" /></svg>
              <Row $gap={3}>查找替换<Caret /></Row>
            </Big>
            <Big>
              <svg width="26" height="37" fill="none" stroke="#50535f" strokeWidth="1.8"><path d="M4 3v29l6-7 5 11 5-2-5-11h10z" /></svg>
              <Row $gap={3}>选择<Caret /></Row>
            </Big>
          </Row>
        </Group>
      </Ribbon>

      <Work>
        <Canvas>
          <Ruler>
            <Band />
            {ticks.slice(0, 49).map((t, i) => <Tick key={i}>{t}</Tick>)}
            <LastTick />
            <Marker $x={112} $y={14} width="14" height="24" fill="#fff" stroke="#3c3f4a"><path d="M2 13V7l5-6 5 6v6zM2 13h10v10H2z" /></Marker>
            <Marker $x={174} $y={0} width="14" height="11" fill="#fff" stroke="#3c3f4a"><path d="M2 1h10v4l-5 5-5-5z" /></Marker>
            <Marker $x={727} $y={13} width="14" height="11" fill="#fff" stroke="#3c3f4a"><path d="M2 10V6l5-5 5 5v4z" /></Marker>
            <Marker $x={142} $y={18} width="10" height="8" fill="none" stroke="#a5aab8" strokeWidth="2"><path d="M2 0v6h7" /></Marker>
          </Ruler>
          <Sheets>
            <Sheet $h={108} $top={7}>
              <Margins>
                <Corner $b="1px 1px 0 0" />
                <HeadText $num>9</HeadText>
                <Corner $b="1px 0 0 1px" />
              </Margins>
            </Sheet>
            <Sheet $h={700} $top={76}>
              <Margins>
                <Corner $b="0 1px 1px 0" />
                <HeadText $line>大连交通大学 2019 届本科生毕业设计（论文）</HeadText>
                <Corner $b="0 0 1px 1px" />
              </Margins>
              <Diagram>
                <Wires width="614" height="460" fill="none" stroke="#000" strokeWidth="2"><path d={wires} /></Wires>
                <Root $b={[194, 0, 274, 40]}>高校教师电子名片系统</Root>
                {nodes.map(([t, ...b]) => <Node key={t} $b={b} $low={t === "修改密码"}><Label>{t}</Label></Node>)}
                <Pointer width="15" height="23"><path d="M13 1v17l-4-3-4 7-3-1 3-7H1z" fill="#fff" stroke="#000" strokeWidth="1.6" /></Pointer>
              </Diagram>
            </Sheet>
          </Sheets>
        </Canvas>
        <ScrollBar>
          <RulerToggle aria-label="标尺">
            <svg width="16" height="18"><rect width="16" height="18" rx="3" fill="#aeb6c8" /><path d="M4 3h8v3l-4 3-4-3zM2 10h3v3h2v-2h2v2h2v-3h3v5H2z" fill="#fff" /></svg>
          </RulerToggle>
          <Track>
            <Caret $up $color="#858ba0" />
            <Thumb />
          </Track>
          <Steps>
            <Caret $color="#858ba0" />
            <Pair aria-label="上一页"><Caret $up $color="#858ba0" /><Caret $up $color="#858ba0" /></Pair>
            <Square aria-label="选择浏览对象" />
            <Pair aria-label="下一页"><Caret $color="#858ba0" /><Caret $color="#858ba0" /></Pair>
          </Steps>
        </ScrollBar>
        <Side>
          <Grip />
          {["brush", "cursor", "sliders", "help", "store", "bulb"].map((n) => (
            <SideButton key={n} aria-label={n}><Icon n={n} s={25} /></SideButton>
          ))}
          <SideEnd><button aria-label="更多工具"><Icon n="dots" s={25} w={2} /></button></SideEnd>
        </Side>
      </Work>

      <Status>
        <Stat $w={120}>页面: 14/28</Stat>
        <Sep $h={25} />
        <Stat $w={120}>字数: 11047</Stat>
        <Stat $w={110} $bg="#e9f1fb"><Icon n="spell" />拼写检查</Stat>
        <Stat $w={10} aria-label="拼写选项"><Caret /></Stat>
        <Space $w={6} />
        <Sep $h={25} />
        <Stat $w={126}><Icon n="proof" />文档校对</Stat>
        <Stat $w={102}>兼容模式</Stat>
        <Sep $h={25} />
        <Stat $w={120}>
          {svg(24, 24, <g stroke={ink}><path d="M1 5V2h15v3M8 2v20M5 22h6" /><path d="M16 13q0-3 3-3t3 3q0 2-3 4v2M19 21v2" /></g>)}
          缺失字体
        </Stat>
        <Grow />
        <Stat $w={54} aria-label="护眼模式"><Icon n="eye" s={25} /></Stat>
        <Sep $h={25} />
        <Space $w={12} />
        <Stat $w={34} $bg="#dcdfe5" aria-label="页面视图"><Icon n="page" s={23} /></Stat>
        <Stat $w={46} aria-label="大纲"><Icon n="outline" /></Stat>
        <Stat $w={32} aria-label="阅读版式"><Icon n="book" /></Stat>
        <Stat $w={46} aria-label="网页版式"><Icon n="globe" /></Stat>
        <Stat $w={34} aria-label="写作模式"><Icon n="pen" s={25} /></Stat>
        <Sep $h={25} $m={10} />
        <Stat $w={38} aria-label="适应页面"><Icon n="fit" c="#4a4f68" /></Stat>
        <Stat $w={56}>70%<Caret /></Stat>
        <Space $w={10} />
        <Stat $w={28} aria-label="缩小">{svg(16, 4, <path d="M0 2h16" stroke="#3a4257" strokeWidth="3.500" />)}</Stat>
        <Zoom type="range" min="0" max="100" defaultValue="31" aria-label="缩放" />
        <Stat $w={16} aria-label="放大">{svg(16, 16, <path d="M0 8h16M8 0v16" stroke="#3a4257" strokeWidth="3" />)}</Stat>
        <Stat $w={57} aria-label="全屏"><Icon n="full" /></Stat>
        <Space $w={7} />
      </Status>

      <Taskbar>
        <TaskButton $w={72} aria-label="开始菜单">{svg(24, 24, <path d="M0 4l10-2v9H0zM11 2l13-2v11H11zM0 12h10v9L0 20zM11 12h13v12l-13-2z" fill="#fff" stroke="none" />)}</TaskButton>
        <TaskButton $w={78} aria-label="小智">
          {svg(34, 34, (
            <g>
              <path d="M9 1q4 0 7 1V17H3q-5-8 0-13 2-3 6-3zM25 1q-5 0-8 2v14h14q4-6 1-11-2-5-7-5zM9 33q5 0 8-2V17H3q-4 6-1 11 2 5 7 5zM25 33q-4 0-7-1V17h13q5 8 0 13-2 3-6 3z" fill="#fff" stroke="none" />
              <path d="M17 1Q10 8 17 17M33 17Q26 10 17 17M17 33Q24 26 17 17M1 17Q8 24 17 17" stroke="#243140" strokeWidth="2.400" />
            </g>
          ))}
        </TaskButton>
        <WebSearch onSubmit={(e) => e.preventDefault()}>
          <Explorer s={24} c="#3a96f5" ring="#3a96f5" />
          <Caret $up $color="#999" />
          <input aria-label="网页搜索" defaultValue="时代人物" />
          <button>搜索一下</button>
        </WebSearch>
        <Row $gap={4}><Sep $h={36} $c="#56616d" /><Sep $h={36} $c="#56616d" /></Row>
        <Space $w={16} />
        <TaskButton aria-label="浏览器"><Explorer s={36} c="#4cc0f2" ring="#f3c431" /></TaskButton>
        <TaskButton aria-label="安全浏览器"><Explorer s={36} c="#fff" ring="#45a52c" bg="#52b52c" /></TaskButton>
        <TaskButton $run aria-label="文件资源管理器">{svg(34, 30, <g stroke="none"><path d="M1 1h11l3 4h18v22H1z" fill="#e8a91d" /><path d="M1 8h32v20H1z" fill="#ffd766" /><path d="M6 16h22v13h-6v-6H12v6H6z" fill="#3a97dc" /></g>)}</TaskButton>
        <TaskButton $run aria-label="忍者"><Ninja w={36} h={36} bg="#f2801c" /></TaskButton>
        <TaskButton $run aria-label="助手">
          {svg(36, 36, (
            <g stroke="none">
              <circle cx="18" cy="18" r="17.500" fill="#fff" />
              <path d="M3 27Q-2 8 14 1q12-3 19 8l-6 4-17 3-3 14z" fill="#7a3a98" />
              <path d="M9 16l16-6 4 6-1 12-8 8h-5L9 26z" fill="#f0c9a4" />
              <path d="M9 15Q18 5 30 9q3 6 0 13-1-7-5-9-7 3-13 3l-4 6z" fill="#1b1420" />
              <path d="M10 18h7v4h-7zM20 17h7v4h-7zM17 19h3M15 29h5" stroke="#222" strokeWidth="1.500" />
            </g>
          ))}
        </TaskButton>
        <Space $w={2} />
        <TaskButton $run $on $w={73} aria-label="文字处理">
          {svg(36, 28, <g stroke="none"><path d="M0 0h18l-3 6H8l5 12 8-18h7L15 28H12z" fill="#f5222c" /><path d="M18 17l5 11h3L36 0h-6L24 16l-3-6z" fill="#fa3a20" /><path d="M21 0h7L15 28h-3l-1-4z" fill="#ff6a2a" /></g>)}
        </TaskButton>
        <Grow />
        <Row>{svg(36, 38, <g stroke="none"><circle cx="24" cy="11" r="9" fill="#f6a81c" /><circle cx="15" cy="15" r="9" fill="#e9f0fb" /><circle cx="8" cy="21" r="8" fill="#dbe6f7" /><circle cx="23" cy="21" r="8" fill="#c9daf3" /><path d="M8 20h15v9H8z" fill="#d5e2f6" /><circle cx="29" cy="32" r="5" fill="#dd1440" /></g>)}</Row>
        <Weather>
          <Over $x={31} $y={4}>77℃</Over>
          <Over $x={10} $y={18} $s={20}>27°C&nbsp;&nbsp;&nbsp;多云</Over>
          <Over $x={14} $y={30}>CPU温度</Over>
        </Weather>
        <Space $w={16} />
        {tray.map(([l, i]) => <TrayButton key={l} aria-label={l}>{i}</TrayButton>)}
        <TrayButton aria-label="输入法">中</TrayButton>
        <Space $w={7} />
        <TrayButton aria-label="输入法工具">{svg(24, 24, <g><rect width="24" height="24" rx="4" fill="#3182f6" stroke="none" /><ellipse cx="12" cy="12" rx="6" ry="7" strokeWidth="2.600" /><circle cx="18" cy="18" r="2.500" fill="#58e26d" stroke="none" /></g>)}</TrayButton>
        <Space $w={7} />
        <Clock>16:42 周三<br />2022/9/14</Clock>
        <Notice aria-label="通知">
          {svg(25, 24, <g stroke="none"><path d="M0 1h24v21H0z" fill="#fff" /><path d="M9 6l8 5-8 5z" fill="#222" /></g>)}
          <Badge>4</Badge>
        </Notice>
        <Sep $h={60} $c="#777" />
        <Space $w={7} />
      </Taskbar>

      <MeterLeft />
      <MeterRight><Level /></MeterRight>
    </Shell>
  );
}
